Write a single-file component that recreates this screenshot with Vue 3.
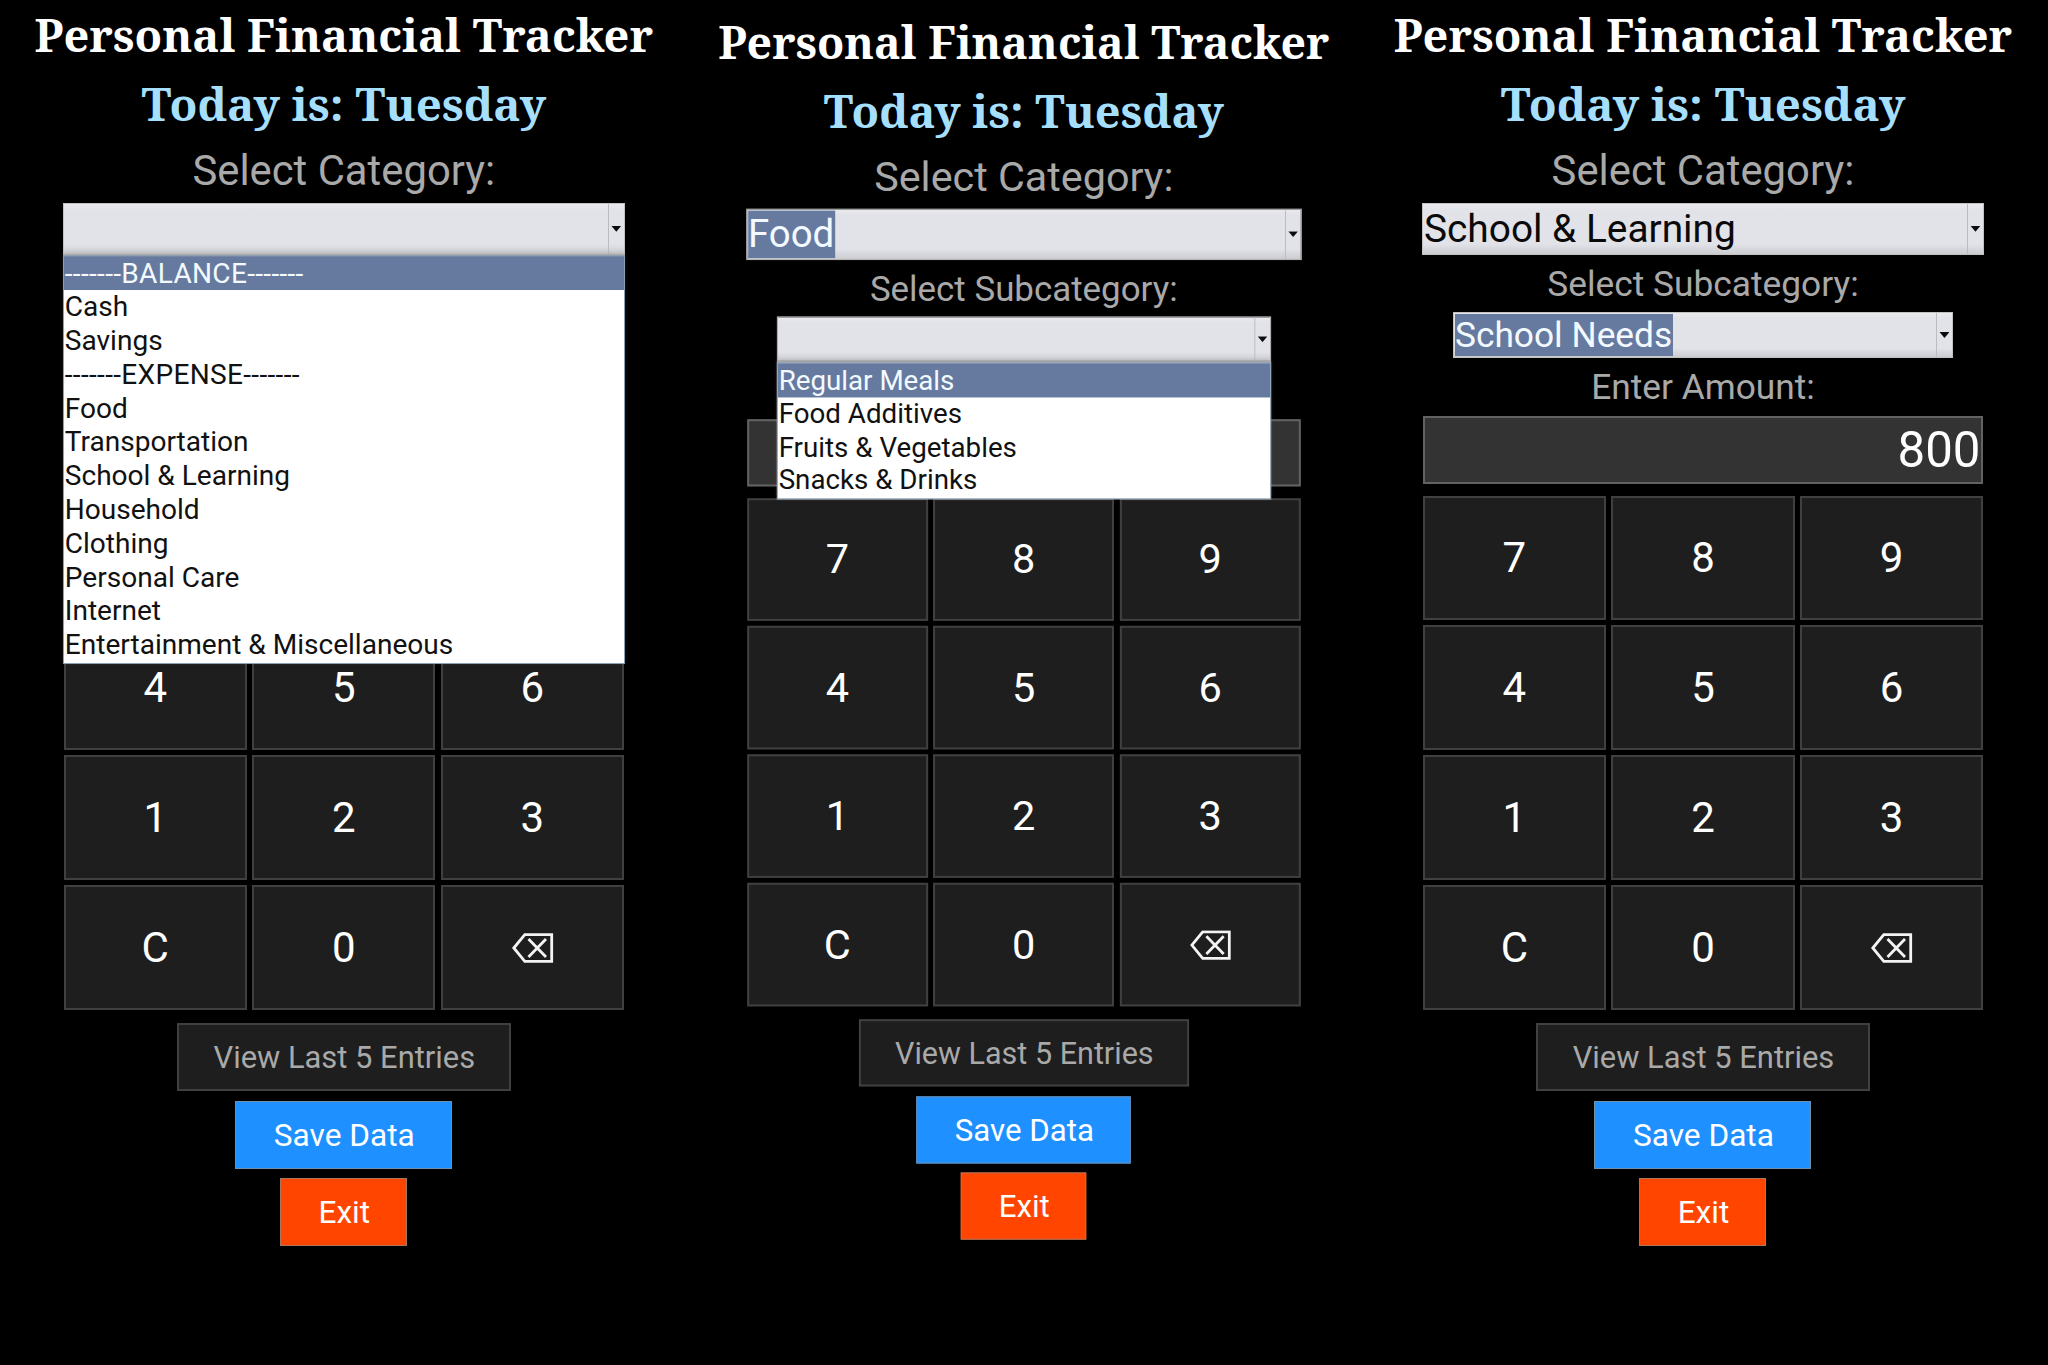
<script setup>
const keys = ['7', '8', '9', '4', '5', '6', '1', '2', '3', 'C', '0', 'back']

const screens = [
  {
    id: 'category',
    compact: false,
    category: '',
    categorySelected: false,
    categoryOptions: [
      '-------BALANCE-------', 'Cash', 'Savings', '-------EXPENSE-------', 'Food', 'Transportation',
      'School & Learning', 'Household', 'Clothing', 'Personal Care', 'Internet', 'Entertainment & Miscellaneous'
    ],
    subcategory: '',
    subcategoryOptions: [],
    amount: ''
  },
  {
    id: 'subcategory',
    compact: true,
    category: 'Food',
    categorySelected: true,
    categoryOptions: [],
    subcategory: '',
    subcategoryOptions: ['Regular Meals', 'Food Additives', 'Fruits & Vegetables', 'Snacks & Drinks'],
    amount: ''
  },
  {
    id: 'amount',
    compact: false,
    category: 'School & Learning',
    categorySelected: false,
    categoryOptions: [],
    subcategory: 'School Needs',
    subcategoryOptions: [],
    amount: '800'
  }
]
</script>

<template>
  <main class="board">
    <section
      v-for="s in screens"
      :key="s.id"
      class="screen"
      :class="{ compact: s.compact, 'category-open': s.categoryOptions.length, 'subcategory-open': s.subcategoryOptions.length }"
    >
      <h1 class="title">Personal Financial Tracker</h1>
      <h2 class="today">Today is: Tuesday</h2>

      <div class="label large">Select Category:</div>
      <div class="combo category">
        <div class="field"><span class="value" :class="{ selected: s.categorySelected }">{{ s.category }}</span></div>
        <div class="arrow"></div>
        <ul v-if="s.categoryOptions.length" class="menu">
          <li v-for="(o, i) in s.categoryOptions" :key="o" :class="{ active: i === 0, group: o[0] === '-' }">{{ o }}</li>
        </ul>
      </div>

      <div class="label sub-label"><template v-if="!s.categoryOptions.length">Select Subcategory:</template></div>
      <div class="combo subcategory">
        <div class="field"><span class="value" :class="{ selected: s.subcategory }">{{ s.subcategory }}</span></div>
        <div class="arrow"></div>
        <ul v-if="s.subcategoryOptions.length" class="menu">
          <li v-for="(o, i) in s.subcategoryOptions" :key="o" :class="{ active: i === 0 }">{{ o }}</li>
        </ul>
      </div>

      <div class="label amount-label"><template v-if="s.amount">Enter Amount:</template></div>
      <div class="entry">{{ s.amount }}</div>

      <div class="keypad">
        <button v-for="(k, i) in keys" :key="k" class="key" type="button">
          <svg v-if="k === 'back'" width="42" height="30" viewBox="0 0 42 30" fill="none" stroke="#f4f4f4" stroke-width="2.8">
            <path d="M1.8 15 12.8 1.6H39.7V28.4H12.8Z" />
            <path d="M16.5 6 34 24M34 6 16.5 24" />
          </svg>
          <template v-else-if="i > 2 || !s.categoryOptions.length">{{ k }}</template>
        </button>
      </div>

      <button class="action view" type="button">View Last 5 Entries</button>
      <button class="action save" type="button">Save Data</button>
      <button class="action exit" type="button">Exit</button>
    </section>
  </main>
</template>

<style>
body {
  background: #000;
}
</style>

<style scoped>
.board {
  display: flex;
  box-sizing: border-box;
  width: 2048px;
  height: 1365px;
  padding-left: 4px;
  overflow: hidden;
  background: #000;
  font-family: Roboto, "Liberation Sans", sans-serif;
}

.screen {
  display: flex;
  flex: none;
  flex-direction: column;
  align-items: center;
  width: 679.6px;
}

.compact {
  transform: translateY(8px) scale(0.9885);
  transform-origin: top center;
}

.title,
.today {
  margin: 0;
  font-family: "Noto Serif", "DejaVu Serif", serif;
  font-weight: 700;
  white-space: nowrap;
}

.title {
  color: #fff;
  font-size: 45.15px;
  line-height: 69px;
}

.today {
  color: #a5dffc;
  font-size: 45.6px;
  line-height: 69px;
}

.label {
  height: 57.5px;
  color: #a9a9a9;
  font-size: 35.3px;
  line-height: 58px;
  white-space: nowrap;
}

.label.large {
  height: 65px;
  font-size: 41.8px;
  line-height: 66px;
}

.combo {
  position: relative;
  display: flex;
  box-sizing: border-box;
  border: 1px solid #c3c2c2;
  background: linear-gradient(#e9e9ee, #e2e3e8 12%, #e2e3e8 80%, #cbccd0);
  color: #0a0a0a;
}

.category {
  width: 562px;
  height: 51.5px;
  font-size: 38.85px;
}

.subcategory {
  width: 500px;
  height: 46px;
  font-size: 35.3px;
}

.field {
  display: flex;
  flex: 1;
  padding: 1px;
}

.value {
  display: flex;
  align-items: center;
  padding-right: 1px;
  white-space: nowrap;
}

.value.selected {
  background: #667aa0;
  color: #f3faff;
}

.arrow {
  display: flex;
  align-items: center;
  justify-content: center;
  width: 15px;
  border-left: 1px solid #bcbcc0;
}

.arrow::after {
  width: 10px;
  height: 6px;
  background: #0c0c0e;
  clip-path: polygon(0 0, 100% 0, 50% 100%);
  content: "";
}

.menu {
  position: absolute;
  z-index: 2;
  top: calc(100% + 1px);
  right: -1px;
  left: -1px;
  margin: 0;
  padding: 0.5px 0 1px;
  border: 1px solid #8d9fb2;
  background: #fff;
  box-shadow: 0 -1px 4px rgba(90, 90, 95, 0.35);
  color: #111;
  font-size: 28.05px;
  line-height: 33.8px;
  list-style: none;
}

.category-open .menu::before,
.subcategory-open .menu::before {
  display: block;
  height: 1px;
  margin-top: -0.5px;
  background: #7788a6;
  content: "";
}

.menu li {
  padding-left: 1px;
  white-space: nowrap;
}

.menu .group {
  letter-spacing: 0.32px;
}

.menu .active {
  background: #667aa0;
  color: #f3faff;
}

.entry {
  box-sizing: border-box;
  width: 560px;
  height: 68.5px;
  padding-right: 0.5px;
  border: 2px solid #626262;
  background: #333;
  color: #fff;
  font-size: 49.2px;
  line-height: 65px;
  text-align: right;
}

.keypad {
  display: grid;
  grid-template-columns: repeat(3, 183.3px);
  grid-auto-rows: 124.4px;
  gap: 5.6px 5.3px;
  margin-top: 11.5px;
}

.key,
.action {
  display: flex;
  align-items: center;
  justify-content: center;
  box-sizing: border-box;
  padding: 0;
  border: 2px solid #404040;
  border-radius: 0;
  background: #1e1e1e;
  font-family: inherit;
}

.key {
  color: #fff;
  font-size: 42px;
}

.key svg {
  margin-left: 1px;
}

.action {
  height: 68px;
  padding-left: 1px;
  color: #fff;
  font-size: 31.6px;
}

.view {
  width: 334px;
  margin-top: 13.5px;
  color: #a9a9a9;
  font-size: 30.9px;
}

.save {
  width: 217px;
  margin-top: 9.8px;
  border: 1px solid #6f8fae;
  background: #1e90ff;
}

.exit {
  width: 127px;
  margin-top: 9.2px;
  border: 1px solid #a9775f;
  background: #ff4500;
}
</style>
